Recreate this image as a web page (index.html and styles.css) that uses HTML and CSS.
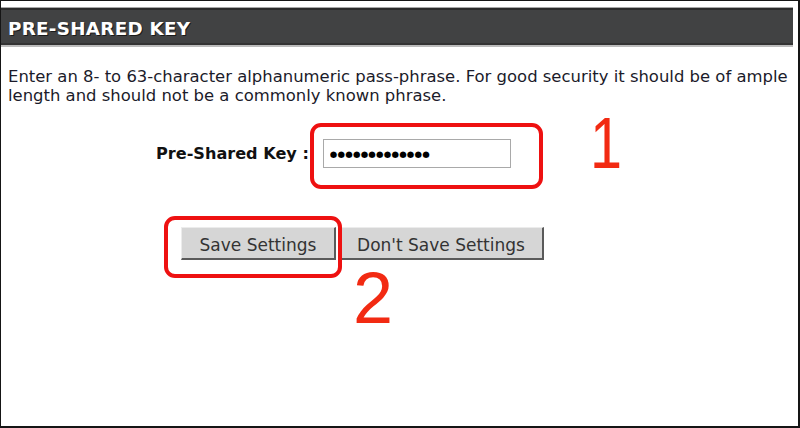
FILE: index.html
```html
<!DOCTYPE html>
<html>
<head>
<meta charset="utf-8">
<link rel="stylesheet" href="styles.css">
</head>
<body>
<div class="frame">
  <div class="header"><h1 class="title">PRE-SHARED KEY</h1></div>
  <p class="intro">Enter an 8- to 63-character alphanumeric pass-phrase. For good security it should be of ample length and should not be a commonly known phrase.</p>
  <div class="key-row">
    <label class="key-label" for="psk">Pre-Shared Key :</label>
    <input class="key-input" id="psk" type="text" value="&#9679;&#9679;&#9679;&#9679;&#9679;&#9679;&#9679;&#9679;&#9679;&#9679;&#9679;&#9679;&#9679;">
  </div>
  <div class="btn-row">
    <button class="btn btn-save">Save Settings</button>
    <button class="btn btn-dont">Don't Save Settings</button>
  </div>
  <div class="mark mark-key"></div>
  <div class="mark mark-save"></div>
  <div class="num num-1">1</div>
  <div class="num num-2">2</div>
</div>
</body>
</html>
```
FILE: styles.css
```css
html, body { margin: 0; padding: 0; background: #fff; }
.frame {
  position: relative;
  width: 800px;
  height: 428px;
  box-sizing: border-box;
  border: 1px solid #151515;
  border-bottom-width: 2px;
  border-right-width: 2px;
  overflow: hidden;
  font-family: "DejaVu Sans", Verdana, sans-serif;
}
.header {
  margin: 6px 5px 0 -1px;
  border-top: 1px solid #a8a8a8;
  background: #414243;
  box-shadow: inset 0 2px 0 #2b2b2b, inset 0 -2px 0 #333;
  border-bottom: 2px solid #bcbcbc;
  height: 37px;
  display: flex;
  align-items: center;
}
.title {
  margin: 0 0 0 8px;
  font-size: 18.3px;
  font-weight: bold;
  color: #fff;
  letter-spacing: 0.3px;
  text-shadow: 1px 1px 0 #1a1a1a;
  line-height: 1;
  padding-top: 5px;
}
.intro {
  margin: 20px 0 0 7px;
  font-size: 16.45px;
  line-height: 19px;
  color: #1b1b2a;
}
.key-row {
  display: flex;
  align-items: center;
  margin-top: 34px;
  padding-left: 155px;
  gap: 14px;
}
.key-label {
  font-weight: bold;
  font-size: 16.1px;
  color: #111;
}
.key-input {
  width: 188px;
  height: 29px;
  box-sizing: border-box;
  border: 1px solid #a9a9a9;
  padding: 0 0 0 6px;
  font-family: "DejaVu Sans", sans-serif;
  font-size: 8.6px;
  letter-spacing: 0.2px;
  color: #000;
  background: #fff;
}
.btn-row {
  display: flex;
  gap: 3px;
  margin-top: 59px;
  padding-left: 180px;
}
.btn {
  height: 33px;
  box-sizing: border-box;
  background: #d6d6d6;
  border: none;
  border-top: 1px solid #ececec;
  border-left: 1px solid #ececec;
  border-right: 2px solid #5a5a5a;
  border-bottom: 2px solid #5a5a5a;
  font-family: "DejaVu Sans", Tahoma, sans-serif;
  font-size: 17px;
  color: #333;
  padding: 3px 0 0 0;
}
.btn-save { width: 155px; }
.btn-dont { width: 205px; }
.mark {
  position: absolute;
  border: 4px solid #ee1111;
  border-radius: 11px;
  box-sizing: border-box;
}
.mark-key { left: 309px; top: 122px; width: 233px; height: 66px; }
.mark-save { left: 163px; top: 215px; width: 178px; height: 62px; }
.num {
  position: absolute;
  font-family: "Liberation Sans", Arial, sans-serif;
  color: #f22a12;
  font-size: 72px;
  line-height: 1;
}
.num-1 { left: 585px; top: 106px; transform: scaleX(0.8); }
.num-2 { left: 352px; top: 261px; }
```
